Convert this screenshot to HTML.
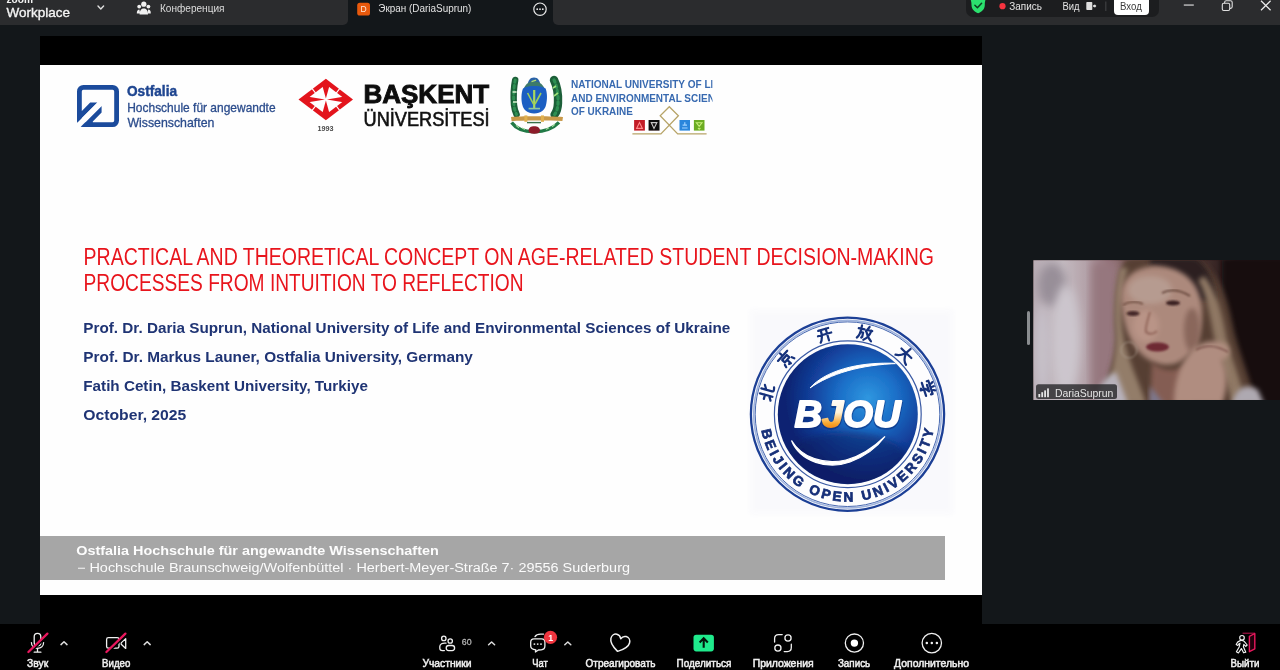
<!DOCTYPE html>
<html><head><meta charset="utf-8"><title>Zoom Workplace</title>
<style>
html,body{margin:0;padding:0;background:#13171a;overflow:hidden}
body{width:1280px;height:670px;position:relative;font-family:"Liberation Sans",sans-serif}
#titlebar{position:absolute;left:0;top:0;width:348px;height:25px;background:#2b2c2e;border-radius:0 0 5px 0}
#titlebar2{position:absolute;left:553px;top:0;width:727px;height:25px;background:#2b2c2e;border-radius:0 0 0 5px}
#tab{position:absolute;left:348px;top:0;width:205px;height:25px;background:#13171a;border-radius:0}
#pill{position:absolute;left:966px;top:0;width:193px;height:17px;background:#1c1d1f;border-radius:0 0 7px 7px}
#vhod{position:absolute;left:1114px;top:0;width:35px;height:15px;background:#fff;border-radius:0 0 4px 4px}
#stage{position:absolute;left:40px;top:36px;width:942px;height:588px;background:#000}
#slide{position:absolute;left:40px;top:65px;width:942px;height:530px;background:#fefefe}
#foot{position:absolute;left:40px;top:536px;width:905px;height:44px;background:#a6a6a6}
#toolbar{position:absolute;left:0;top:624px;width:1280px;height:46px;background:#000}
#video{position:absolute;left:1033px;top:260px;width:247px;height:140px;background:#2a1a18;overflow:hidden}
#grip{position:absolute;left:1027px;top:311px;width:3px;height:34px;background:#8a8d90;border-radius:2px}
svg{position:absolute;left:0;top:0;filter:blur(0.3px)}
text{font-family:"Liberation Sans",sans-serif}
</style></head><body>
<div id="titlebar"></div><div id="titlebar2"></div><div id="tab"></div><div id="pill"></div><div id="vhod"></div>
<div id="stage"></div><div id="slide"></div><div id="foot"></div>
<div id="video"></div><div id="grip"></div>
<div id="toolbar"></div>
<svg id="ov" width="1280" height="670" viewBox="0 0 1280 670">
<!-- ===== TITLE BAR ===== -->
<g id="titlebar-content" fill="#e6e6e6">
  <text x="6.5" y="2.5" font-size="11" font-weight="bold" textLength="26.5" lengthAdjust="spacingAndGlyphs" fill="#f2f2f2">zoom</text>
  <text x="6.5" y="16.7" font-size="13.4" textLength="63.5" lengthAdjust="spacingAndGlyphs" fill="#f4f4f4" stroke="#f4f4f4" stroke-width="0.35">Workplace</text>
  <path d="M98 6.1 L100.8 8.9 L103.6 6.1" fill="none" stroke="#e0e0e0" stroke-width="1.4" stroke-linecap="round" stroke-linejoin="round"/>
  <!-- conference people icon -->
  <g fill="#f0f0f0">
    <circle cx="143.8" cy="4.2" r="2.6"/>
    <circle cx="139.2" cy="6.6" r="1.9"/>
    <circle cx="148.4" cy="6.6" r="1.9"/>
    <path d="M139.6 14.6 C139.6 10.2 141.4 8.4 143.8 8.4 C146.2 8.4 148 10.2 148 14.6 Z"/>
    <path d="M136.8 13.6 C136.8 10.6 137.8 9.6 139.4 9.6 L140.2 13.6 Z"/>
    <path d="M150.8 13.6 C150.8 10.6 149.8 9.6 148.2 9.6 L147.4 13.6 Z"/>
  </g>
  <text x="160" y="12" font-size="10" textLength="64.5" lengthAdjust="spacingAndGlyphs" fill="#dcdcdc">Конференция</text>
  <!-- active tab -->
  <rect x="357.2" y="2.8" width="12.8" height="12.8" rx="2.6" fill="#e8590c"/>
  <text x="360.6" y="12.3" font-size="8.5" fill="#ffe9dc">D</text>
  <text x="378.3" y="12" font-size="10" textLength="93" lengthAdjust="spacingAndGlyphs" fill="#e2e2e2">Экран (DariaSuprun)</text>
  <circle cx="540" cy="9.2" r="6.2" fill="none" stroke="#e8e8e8" stroke-width="1.2"/>
  <circle cx="537.2" cy="9.2" r="0.9" fill="#e8e8e8"/><circle cx="540" cy="9.2" r="0.9" fill="#e8e8e8"/><circle cx="542.8" cy="9.2" r="0.9" fill="#e8e8e8"/>
  <!-- right pill -->
  <path d="M970.8 0 H985.4 C985 1.6 984.8 3 984.8 5 C984.8 9.5 981.5 12 978.1 13.2 C974.8 12 971.5 9.5 971.5 5 C971.5 3 971.2 1.6 970.8 0 Z" fill="#2be06e"/>
  <path d="M974.9 5.2 L977.4 7.7 L981.6 3.2" fill="none" stroke="#0c3d20" stroke-width="1.5" stroke-linecap="round" stroke-linejoin="round"/>
  <circle cx="1002.5" cy="6.2" r="3.1" fill="#f5333f"/>
  <text x="1009.3" y="9.6" font-size="10" textLength="32.7" lengthAdjust="spacingAndGlyphs" fill="#e4e4e4">Запись</text>
  <text x="1062.5" y="9.6" font-size="10" textLength="17" lengthAdjust="spacingAndGlyphs" fill="#e4e4e4">Вид</text>
  <rect x="1086.3" y="2" width="6" height="8" rx="0.8" fill="#dedede"/>
  <path d="M1093.2 4.9 H1094.6 V3.9 L1096.4 6 L1094.6 8.1 V7.1 H1093.2 Z" fill="#dedede"/>
  <rect x="1105.4" y="1.5" width="0.9" height="9.5" fill="#4a4b4d"/>
  <text x="1120" y="9.6" font-size="10" textLength="21.8" lengthAdjust="spacingAndGlyphs" fill="#3a3a3a">Вход</text>
  <!-- window controls -->
  <rect x="1183.8" y="4.5" width="10" height="1.1" fill="#e6e6e6"/>
  <rect x="1222.3" y="3.3" width="7.4" height="7.2" rx="1.4" fill="none" stroke="#e0e0e0" stroke-width="1.1"/>
  <path d="M1224.6 3.2 V2.4 C1224.6 1.4 1225.2 0.8 1226.2 0.8 H1230.6 C1231.6 0.8 1232.2 1.4 1232.2 2.4 V6.8 C1232.2 7.8 1231.6 8.4 1230.6 8.4 H1229.9" fill="none" stroke="#e0e0e0" stroke-width="1.1"/>
  <path d="M1261 0.8 L1270.6 10.2 M1270.6 0.8 L1261 10.2" stroke="#ececec" stroke-width="1.2" fill="none"/>
</g>
<!-- ===== SLIDE CONTENT ===== -->
<g id="slide-text">
  <text x="83.6" y="264.5" font-size="23" fill="#e8141c" textLength="850.4" lengthAdjust="spacingAndGlyphs">PRACTICAL AND THEORETICAL CONCEPT ON AGE-RELATED STUDENT DECISION-MAKING</text>
  <text x="83.6" y="290.8" font-size="23" fill="#e8141c" textLength="440" lengthAdjust="spacingAndGlyphs">PROCESSES FROM INTUITION TO REFLECTION</text>
  <g font-size="15.4" font-weight="bold" fill="#1f3474">
    <text x="83.3" y="333.1" textLength="647" lengthAdjust="spacingAndGlyphs">Prof. Dr. Daria Suprun, National University of Life and Environmental Sciences of Ukraine</text>
    <text x="83.3" y="361.9" textLength="389.6" lengthAdjust="spacingAndGlyphs">Prof. Dr. Markus Launer, Ostfalia University, Germany</text>
    <text x="83.3" y="390.8" textLength="284.6" lengthAdjust="spacingAndGlyphs">Fatih Cetin, Baskent University, Turkiye</text>
    <text x="83.3" y="419.7" textLength="103" lengthAdjust="spacingAndGlyphs">October, 2025</text>
  </g>
  <text x="76.2" y="554.6" font-size="12" font-weight="bold" fill="#fdfdfd" textLength="362.6" lengthAdjust="spacingAndGlyphs">Ostfalia Hochschule für angewandte Wissenschaften</text>
  <text x="77" y="571.5" font-size="12" fill="#fbfbfb" textLength="553" lengthAdjust="spacingAndGlyphs">− Hochschule Braunschweig/Wolfenbüttel · Herbert-Meyer-Straße 7· 29556 Suderburg</text>
</g>
<!-- Ostfalia logo -->
<g id="ostfalia">
  <rect x="79.4" y="87.4" width="37.2" height="37.2" rx="4" fill="none" stroke="#1b4b9c" stroke-width="4.8"/>
  <polygon points="81.9,110.9 90.2,102.5 97.4,102.5 77.1,122.8 77.1,112" fill="#1b4b9c"/>
  <polygon points="101.6,105.9 101.6,112.6 92.8,121.4 92.8,126.8 80.9,126.8" fill="#1b4b9c"/>
  <polygon points="73,126.9 97.5,102.4 97.5,100 104,100 104,103.5 80.5,127 80.5,130 73,130" fill="#fefefe"/>
  <text x="127" y="96.2" font-size="14" font-weight="bold" fill="#1e4590" stroke="#1e4590" stroke-width="0.45" textLength="50" lengthAdjust="spacingAndGlyphs">Ostfalia</text>
  <text x="127.2" y="112.2" font-size="12.6" fill="#2b4c8c" stroke="#2b4c8c" stroke-width="0.3" textLength="148.4" lengthAdjust="spacingAndGlyphs">Hochschule für angewandte</text>
  <text x="127.4" y="126.8" font-size="12.6" fill="#2b4c8c" stroke="#2b4c8c" stroke-width="0.3" textLength="87" lengthAdjust="spacingAndGlyphs">Wissenschaften</text>
</g>
<!-- Baskent logo -->
<g id="baskent">
  <polygon points="298.5,99.5 325.9,78.7 353,99.5 325.9,120.3" fill="#e3141c"/>
  <polygon points="306.2,99.5 325.9,84.5 345.6,99.5 325.9,114.5" fill="#fefefe"/>
  <polygon points="325.9,98.6 322.3,85.6 325.9,82 329.5,85.6" fill="#e3141c"/>
  <polygon points="325.9,100.4 322.3,113.4 325.9,117 329.5,113.4" fill="#e3141c"/>
  <polygon points="324.9,99.5 308.6,96.7 304,99.5 308.6,102.3" fill="#e3141c"/>
  <polygon points="326.9,99.5 343.2,96.7 348,99.5 343.2,102.3" fill="#e3141c"/>
  <g stroke="#fefefe" stroke-width="1.1">
    <path d="M310.6 86.6 L315.6 93.2 M341.2 86.6 L336.2 93.2 M310.6 112.4 L315.6 105.8 M341.2 112.4 L336.2 105.8"/>
  </g>
  <text x="317.4" y="131.1" font-size="7.2" font-weight="bold" fill="#4a4a4a" textLength="16" lengthAdjust="spacingAndGlyphs">1993</text>
  <text x="363.4" y="102.8" font-size="25.7" font-weight="bold" fill="#0d0d0d" stroke="#0d0d0d" stroke-width="0.9" textLength="125.8" lengthAdjust="spacingAndGlyphs">BAŞKENT</text>
  <text x="363.6" y="126" font-size="20" fill="#111" stroke="#111" stroke-width="0.6" textLength="126" lengthAdjust="spacingAndGlyphs">ÜNİVERSİTESİ</text>
</g>
<!-- NUBiP logo -->
<defs>
  <clipPath id="nubclip"><rect x="505" y="70" width="207.5" height="70"/></clipPath>
  <filter id="b06" x="-5%" y="-5%" width="110%" height="110%"><feGaussianBlur stdDeviation="0.6"/></filter>
  <filter id="b04" x="-5%" y="-5%" width="110%" height="110%"><feGaussianBlur stdDeviation="0.4"/></filter>
</defs>
<g id="nubip" clip-path="url(#nubclip)">
  <g filter="url(#b06)">
    <!-- wreaths -->
    <path d="M515.2 80 C513.6 88 513.4 98 514 105 C514.4 109 515.4 112 516.6 114.5" fill="none" stroke="#1b5e38" stroke-width="6.4" stroke-linecap="round"/>
    <path d="M515.2 80 C513.6 88 513.4 98 514 105 C514.4 109 515.4 112 516.6 114.5" fill="none" stroke="#2f8f52" stroke-width="3" stroke-dasharray="2.4 3.2" stroke-linecap="round"/>
    <path d="M512.6 92 h4 M513 102 h4" stroke="#d8f0d0" stroke-width="1.6"/>
    <path d="M554 80 C557 86 558.4 95 558 103 C557.8 108 556.6 112 554.6 114.5" fill="none" stroke="#1b5e38" stroke-width="8.4" stroke-linecap="round"/>
    <path d="M554 80 C557 86 558.4 95 558 103 C557.8 108 556.6 112 554.6 114.5" fill="none" stroke="#2f8f52" stroke-width="3.2" stroke-dasharray="2.4 3.2" stroke-linecap="round"/>
    <path d="M554 96 l4 -3 M553 88 l3 -2" stroke="#9fe07a" stroke-width="1.6"/>
    <!-- top crest -->
    <path d="M527.5 86.5 C527.5 81 530 77.6 534 77.6 C538 77.6 540.4 81 540.4 86.5 Z" fill="#2a62a8"/>
    <path d="M524 88 C526 83 530 81.4 534 81.4 C538 81.4 542 83 544.4 88 Z" fill="#3d7a6a"/>
    <path d="M531.5 81.6 l4.6 -1.4" stroke="#b8e070" stroke-width="1.4"/>
    <!-- shield -->
    <path d="M523 88.6 C526 86.6 530 86 534.2 86 C538.4 86 542.6 86.6 545.6 88.6 C547.4 93 547.4 100 546 105 C545 109.6 541 113.4 534.2 113.6 C527.4 113.4 523.4 109.6 522.4 105 C521 100 521.2 93 523 88.6 Z" fill="#1f5fc2"/>
    <!-- wheat -->
    <path d="M534.2 90 V108" stroke="#a8d860" stroke-width="2.2"/>
    <path d="M527.6 93 L533.4 104 M541 93 L535 104" stroke="#9ccf58" stroke-width="1.6"/>
    <path d="M528.6 108.6 H540" stroke="#8fc7a0" stroke-width="1.6"/>
    <!-- banner -->
    <path d="M511 117 C520 116 548 116 563 117 L562.4 121 C548 120.4 522 120.4 511.6 121.2 Z" fill="#c9994a"/>
    <rect x="524.4" y="115.4" width="3" height="6.4" fill="#e0b050"/><rect x="541" y="115.4" width="3" height="6.4" fill="#e0b050"/>
    <path d="M527 122.6 H541" stroke="#37704a" stroke-width="1.4"/>
    <!-- bottom wreath -->
    <path d="M511.6 122.4 C516 128.6 524 131.6 534.2 131.8 C544.4 131.6 553 128.6 559 122.4" fill="none" stroke="#237a46" stroke-width="3.4"/>
    <path d="M516 125.4 l3 2.4 M522 128 l3 1.6 M546 129.4 l3 -1.6 M552 126.8 l3 -2.4" stroke="#9fdc9a" stroke-width="1.1"/>
    <!-- red bottom -->
    <path d="M528.6 130.6 C528.6 127.6 531 126.2 534.2 126.2 C537.4 126.2 540 127.6 540 130.6 C540 132.8 538 133.8 534.2 133.8 C530.4 133.8 528.6 132.8 528.6 130.6 Z" fill="#8c1c2c"/>
  </g>
  <g font-size="10" font-weight="bold" fill="#3769b0" filter="url(#b04)">
    <text x="571" y="88" textLength="155.2" lengthAdjust="spacingAndGlyphs">NATIONAL UNIVERSITY OF LIFE</text>
    <text x="571" y="101.7" textLength="164.4" lengthAdjust="spacingAndGlyphs">AND ENVIRONMENTAL SCIENCES</text>
    <text x="571" y="115.4" textLength="61.9" lengthAdjust="spacingAndGlyphs">OF UKRAINE</text>
  </g>
  <g filter="url(#b04)">
    <path d="M632.4 133.9 H660.9 L678.4 115.8 L669.3 106.7 L660.2 115.8 L677.7 133.9 H706.6" fill="none" stroke="#b7a468" stroke-width="1.3" stroke-linejoin="miter"/>
    <rect x="634.1" y="120" width="10.8" height="10.6" fill="#c21c28"/>
    <path d="M636.6 128.4 L639.5 122.6 L642.4 128.4 Z" fill="none" stroke="#ff8a8a" stroke-width="1.1"/>
    <rect x="648.6" y="120" width="10.9" height="10.6" fill="#0c0808"/>
    <path d="M651.2 122.6 L654 128.4 L656.9 122.6 Z" fill="none" stroke="#c8c8c8" stroke-width="1.1"/>
    <rect x="679.5" y="120" width="10.5" height="10.6" fill="#2a86dc"/>
    <path d="M682 128 H687.6 M682.6 125.2 H687 M684.8 122.2 V125" stroke="#9fd2ff" stroke-width="1.2" fill="none"/>
    <rect x="693.9" y="120" width="10.6" height="10.6" fill="#6cac20"/>
    <path d="M696.4 122.8 H702 L699.2 126.4 Z M698 128 L699.2 129.2 L700.4 128" stroke="#c6ee7a" stroke-width="1.1" fill="none"/>
  </g>
</g>
<!-- BJOU logo -->
<defs>
  <radialGradient id="disc" cx="868" cy="398" r="82" gradientUnits="userSpaceOnUse">
    <stop offset="0" stop-color="#2f97e0"/><stop offset="0.35" stop-color="#1b6fc8"/><stop offset="0.7" stop-color="#123f9a"/><stop offset="1" stop-color="#0c2472"/>
  </radialGradient>
  <linearGradient id="jgrad" x1="0" y1="398" x2="0" y2="430" gradientUnits="userSpaceOnUse">
    <stop offset="0" stop-color="#ffffff"/><stop offset="0.45" stop-color="#fff3d8"/><stop offset="0.8" stop-color="#f7a52c"/><stop offset="1" stop-color="#ef7d12"/>
  </linearGradient>
  <filter id="b08" x="-5%" y="-5%" width="110%" height="110%"><feGaussianBlur stdDeviation="0.7"/></filter>
  <filter id="b3" x="-10%" y="-10%" width="120%" height="120%"><feGaussianBlur stdDeviation="3"/></filter>
  <path id="bjarc" d="M761.4 430.2 A87.6 87.6 0 0 0 933.6 430.2"/>
  <clipPath id="discclip"><circle cx="847.8" cy="414.2" r="69.5"/></clipPath>
</defs>
<g id="bjou">
  <rect x="750" y="310" width="203" height="204" fill="#f9f9fc" filter="url(#b3)"/>
  <g filter="url(#b08)">
    <circle cx="847.5" cy="414.2" r="96.6" fill="#fdfdfe" stroke="#1c3f96" stroke-width="2.3"/>
    <circle cx="847.5" cy="414.2" r="93.8" fill="none" stroke="#9fb3dc" stroke-width="1.6"/>
    <circle cx="847.5" cy="414.2" r="92.3" fill="none" stroke="#3358a8" stroke-width="0.9"/>
    <circle cx="847.8" cy="414.2" r="73.4" fill="none" stroke="#3a5aa4" stroke-width="1.2"/>
    <circle cx="847.8" cy="414.2" r="70" fill="url(#disc)"/>
    <g clip-path="url(#discclip)">
      <ellipse cx="846" cy="462" rx="62" ry="30" fill="#081a5c" opacity="0.45" filter="url(#b3)"/>
      <!-- swooshes -->
      <path d="M810 388 C824 372 856 361 899 363.5 C860 364.5 830 374 810 388 Z" fill="#ffffff" stroke="#ffffff" stroke-width="1"/>
      <path d="M791.5 440.5 C800 462 828 470 850 462 C866 456 878 446 885 436.5 C872 449 858 457 846 460 C824 465 802 458 791.5 440.5 Z" fill="#ffffff" stroke="#ffffff" stroke-width="1.2"/>
    </g>
    <!-- BJOU -->
    <g font-size="37" font-weight="bold" font-style="italic" stroke-linejoin="round">
      <text x="794.5" y="428" fill="#0b2a78" opacity="0.55" textLength="106" lengthAdjust="spacingAndGlyphs" stroke="#0b2a78" stroke-width="3.4">BJOU</text>
      <text x="794.5" y="427" fill="#ffffff" stroke="#ffffff" stroke-width="1.8" textLength="106" lengthAdjust="spacingAndGlyphs">B<tspan fill="url(#jgrad)" stroke="url(#jgrad)">J</tspan>OU</text>
    </g>
    <!-- ring text -->
    <text font-size="13.6" font-weight="bold" fill="#152f78" stroke="#152f78" stroke-width="0.7"><textPath href="#bjarc" textLength="243" lengthAdjust="spacing">BEIJING OPEN UNIVERSITY</textPath></text>
    <!-- pseudo-calligraphy CJK glyphs -->
    <g fill="none" stroke="#15317c" stroke-width="2.6" stroke-linecap="round" stroke-linejoin="round">
      <g transform="translate(767.3 392.7) rotate(-75) scale(0.86)"><path d="M-3 -8 V7 M-3 -2 H-8 M-8 6 L-3 3 M3 -8 V5 C3 7 5 7 8 6 M3 -2 L8 -5"/></g>
      <g transform="translate(785.8 358.7) rotate(-48) scale(0.86)"><path d="M0 -9 V-7 M-8 -5 H8 M-4 -2 H4 V2 H-4 Z M0 2 V8 L-2 7 M-6 4 L-7 7 M6 4 L7 7"/></g>
      <g transform="translate(824.6 334.4) rotate(-16) scale(0.86)"><path d="M-6 -6 H6 M-8 0 H8 M-3 -6 C-3 2 -4 5 -7 8 M3 -6 V8"/></g>
      <g transform="translate(864.8 333) rotate(12) scale(0.86)"><path d="M-5 -8 V-6 M-8 -4 H-1 M-5 -4 C-5 2 -6 5 -8 7 M-5 0 H-2 V5 L-3 6 M4 -8 L1 -2 M2 -4 H8 M7 -4 C6 2 3 6 0 8 M2 -1 C4 3 6 6 9 8"/></g>
      <g transform="translate(905.2 354.5) rotate(44) scale(0.86)"><path d="M-8 -2 H8 M0 -9 C0 -1 -3 5 -8 8 M0 -1 C2 4 5 7 9 8"/></g>
      <g transform="translate(926.4 388.6) rotate(72) scale(0.86)"><path d="M-5 -9 L-4 -7 M0 -9 V-7 M5 -9 L4 -7 M-8 -3 V-5 H8 V-3 M-4 -2 H4 L0 1 V7 L-2 6 M-8 3 H8"/></g>
    </g>
  </g>
</g>
<!-- webcam tile -->
<defs>
  <clipPath id="vclip"><rect x="1033.4" y="260.2" width="246.6" height="139.8"/></clipPath>
  <filter id="vb6" x="-20%" y="-20%" width="140%" height="140%"><feGaussianBlur stdDeviation="5"/></filter>
  <filter id="vb3" x="-20%" y="-20%" width="140%" height="140%"><feGaussianBlur stdDeviation="2.5"/></filter>
  <filter id="vb1" x="-20%" y="-20%" width="140%" height="140%"><feGaussianBlur stdDeviation="1.2"/></filter>
  <linearGradient id="vbg" x1="1033" y1="0" x2="1280" y2="0" gradientUnits="userSpaceOnUse">
    <stop offset="0" stop-color="#cfc4cc"/><stop offset="0.12" stop-color="#ddd5db"/><stop offset="0.22" stop-color="#c9b6bd"/><stop offset="0.3" stop-color="#a8848c"/><stop offset="0.38" stop-color="#8a6a66"/><stop offset="0.7" stop-color="#4a3430"/><stop offset="0.82" stop-color="#1e1315"/><stop offset="1" stop-color="#140d10"/>
  </linearGradient>
</defs>
<g id="video" clip-path="url(#vclip)">
  <rect x="1033" y="260" width="247" height="140" fill="url(#vbg)"/>
  <ellipse cx="1052" cy="285" rx="14" ry="22" fill="#aaa2ac" filter="url(#vb6)"/>
  <ellipse cx="1066" cy="340" rx="14" ry="55" fill="#e6e1e8" filter="url(#vb6)"/>
  <ellipse cx="1042" cy="350" rx="7" ry="45" fill="#e0dbe4" filter="url(#vb6)"/>
  <rect x="1092" y="262" width="26" height="140" fill="#a8878e" filter="url(#vb6)"/>
  <!-- dark right bg -->
  <rect x="1222" y="258" width="62" height="146" fill="#150d11" filter="url(#vb3)"/>
  <!-- hair mass -->
  <path d="M1124 262 C1116 280 1114 310 1116 336 C1116 360 1106 380 1100 404 H1256 C1250 376 1238 352 1232 322 C1226 290 1214 264 1192 258 H1130 Z" fill="#5e4638" filter="url(#vb3)"/>
  <path d="M1150 258 H1196 C1208 266 1214 280 1216 300 L1196 300 C1192 282 1176 268 1150 266 Z" fill="#2e2420" filter="url(#vb3)"/>
  <path d="M1120 268 C1114 290 1114 316 1116 336 C1116 362 1108 382 1104 404 H1146 C1140 384 1130 366 1124 340 C1120 318 1120 292 1128 268 Z" fill="#a58e76" filter="url(#vb3)"/>
  <path d="M1204 276 C1216 290 1222 312 1226 336 C1230 356 1240 376 1246 404 H1232 C1226 376 1216 352 1212 326 C1208 304 1204 290 1198 280 Z" fill="#a08870" filter="url(#vb3)"/>
  <!-- face -->
  <path d="M1121 300 C1120 280 1132 268 1154 266 C1180 266 1200 280 1202 308 C1203 334 1194 358 1174 364 C1156 368 1138 356 1130 338 C1124 326 1122 312 1121 300 Z" fill="#c29c8c" filter="url(#vb3)"/>
  <ellipse cx="1150" cy="290" rx="22" ry="14" fill="#cdb0a2" filter="url(#vb3)"/>
  <ellipse cx="1146" cy="326" rx="13" ry="16" fill="#d0a898" filter="url(#vb3)"/>
  <ellipse cx="1192" cy="330" rx="8" ry="22" fill="#9a7466" filter="url(#vb3)"/>
  <!-- neck -->
  <path d="M1152 362 C1162 372 1178 372 1188 364 L1192 404 H1150 Z" fill="#94695c" filter="url(#vb3)"/>
  <ellipse cx="1202" cy="370" rx="7" ry="12" fill="#1c1214" filter="url(#vb3)"/>
  <!-- clothes -->
  <path d="M1094 404 C1098 384 1106 376 1116 372 L1128 404 Z" fill="#cfcbd4" filter="url(#vb3)"/>
  <path d="M1232 404 C1236 388 1246 382 1258 390 L1264 404 Z" fill="#c4c0c8" filter="url(#vb3)"/>
  <path d="M1150 386 L1164 404 H1150 Z" fill="#8a88a0" filter="url(#vb3)"/>
  <!-- hand -->
  <path d="M1174 404 C1174 382 1180 364 1190 352 C1198 342 1214 338 1226 344 C1232 350 1230 358 1222 360 C1228 372 1228 388 1222 404 Z" fill="#c6a090" filter="url(#vb3)"/>
  <path d="M1196 350 C1206 344 1218 346 1228 352" stroke="#8a5e54" stroke-width="1.6" fill="none" filter="url(#vb1)"/>
  <!-- features -->
  <ellipse cx="1133" cy="313.5" rx="6.5" ry="2.4" fill="#4a2c2a" filter="url(#vb1)"/>
  <ellipse cx="1173" cy="303" rx="7" ry="2.6" fill="#3c2422" filter="url(#vb1)"/>
  <path d="M1123 305 C1129 301 1137 301 1143 304" stroke="#7a5646" stroke-width="1.6" fill="none" filter="url(#vb1)"/>
  <path d="M1162 293 C1170 289 1180 290 1190 296" stroke="#6a483a" stroke-width="1.7" fill="none" filter="url(#vb1)"/>
  <path d="M1150 312 C1147 322 1145 328 1146 332 C1150 335 1154 334 1157 331" stroke="#a8796a" stroke-width="2.2" fill="none" filter="url(#vb1)"/>
  <ellipse cx="1157.5" cy="347" rx="11.5" ry="4.6" fill="#7a2f39" filter="url(#vb1)"/>
  <circle cx="1129" cy="350" r="8" fill="none" stroke="#cdbfae" stroke-width="1" filter="url(#vb1)" opacity="0.7"/>
  <rect x="1033" y="260" width="247" height="140" fill="#1c1216" opacity="0.13"/>
  <!-- name tag -->
  <rect x="1036" y="384.3" width="81" height="14.8" rx="2.5" fill="#2a2a2c" opacity="0.82"/>
  <g fill="#e6e6e6"><rect x="1038.4" y="394" width="1.8" height="3.2"/><rect x="1041.3" y="392.2" width="1.8" height="5"/><rect x="1044.2" y="390.4" width="1.8" height="6.8"/><rect x="1047.1" y="388.4" width="1.8" height="8.8"/></g>
  <text x="1054.9" y="396.6" font-size="10.4" fill="#e4e4e4" textLength="58.5" lengthAdjust="spacingAndGlyphs">DariaSuprun</text>
</g>
<!-- ===== BOTTOM TOOLBAR ===== -->
<g id="toolbar-content" fill="none" stroke="#f0f0f0" stroke-width="1.3" stroke-linecap="round" stroke-linejoin="round">
  <!-- mic -->
  <rect x="34.2" y="633.4" width="6.6" height="12.4" rx="3.3"/>
  <path d="M31.4 642.6 C31.4 646 34 648.4 37.5 648.4 C41 648.4 43.6 646 43.6 642.6"/>
  <path d="M37.5 648.4 V652.2 M34.2 652.2 H40.9"/>
  <path d="M48.6 634.6 L29.6 653" stroke="#000" stroke-width="2"/><path d="M47.4 633.6 L28.4 652" stroke="#e8175d" stroke-width="2.3"/>
  <path d="M61 644.6 L64 641.8 L67 644.6" stroke="#dcdcdc" stroke-width="1.5"/>
  <!-- video -->
  <rect x="106.6" y="637.6" width="12.4" height="10.6" rx="1.8"/>
  <path d="M121.2 642.9 L125.7 638.6 V648.4 L121.2 644.2 Z"/>
  <path d="M126.6 634.6 L107.6 653" stroke="#000" stroke-width="2"/><path d="M125.4 633.6 L106.4 652" stroke="#e8175d" stroke-width="2.3"/>
  <path d="M144.2 644.6 L147.2 641.8 L150.2 644.6" stroke="#dcdcdc" stroke-width="1.5"/>
  <!-- participants -->
  <circle cx="443.8" cy="638.4" r="2.2"/>
  <circle cx="450.2" cy="641" r="2.2"/>
  <path d="M446 643.2 C442.4 642.6 439.8 644.2 439.8 646.6 V648.2 C439.8 649.8 440.8 650.6 442.4 650.6 H444.4"/>
  <rect x="446.2" y="645.5" width="8.4" height="5.1" rx="2.5"/>
  <path d="M488.6 644.8 L491.6 642 L494.6 644.8" stroke="#dcdcdc" stroke-width="1.5"/>
  <!-- chat -->
  <path d="M535 636.6 C536 634.8 538 634.1 540.6 634.1 H543.6"/>
  <path d="M534 638.9 H541.6 C543.6 638.9 544.9 640.2 544.9 642.2 V646 C544.9 648.2 543.4 649.6 541.2 649.8 L538.4 650 L535.4 652 L535.8 649.9 C533 649.6 530.7 648.2 530.7 646 V642.2 C530.7 640.2 532 638.9 534 638.9 Z"/>
  <g fill="#e8e8e8" stroke="none"><circle cx="534.4" cy="644.1" r="0.95"/><circle cx="537.7" cy="644.1" r="0.95"/><circle cx="541" cy="644.1" r="0.95"/></g>
  <circle cx="550.5" cy="637.3" r="6.6" fill="#f0353f" stroke="none"/>
  <path d="M564.8 644.8 L567.8 642 L570.8 644.8" stroke="#dcdcdc" stroke-width="1.5"/>
  <!-- heart -->
  <g transform="translate(619.6 643.2) rotate(14)" stroke-width="1.5">
    <path d="M0 8.4 C-5.4 5.2 -9.6 1.6 -9.6 -2.6 C-9.6 -6 -7.4 -8 -4.8 -8 C-2.8 -8 -1 -7 0 -4.6 C1 -7 2.8 -8 4.8 -8 C7.4 -8 9.6 -6 9.6 -2.6 C9.6 1.6 5.4 5.2 0 8.4 Z"/>
  </g>
  <!-- share -->
  <rect x="693.5" y="634.8" width="20.4" height="16.6" rx="2.8" fill="#1fea8c" stroke="none"/>
  <path d="M703.7 647.8 V640 M699.6 642.4 L703.7 638.3 L707.8 642.4" stroke="#04140b" stroke-width="2.1" stroke-linecap="butt" stroke-linejoin="miter"/>
  <!-- apps -->
  <path d="M774.6 642 V638.6 C774.6 636 776 634.6 778.6 634.6 H782.2"/>
  <circle cx="788" cy="638" r="3.1"/>
  <circle cx="777.9" cy="648.1" r="3.1"/>
  <path d="M791.3 644.2 V647.6 C791.3 650.2 789.9 651.6 787.3 651.6 H784.2"/>
  <!-- record -->
  <circle cx="854.4" cy="643.1" r="9.1"/>
  <circle cx="854.4" cy="643.1" r="3.7" fill="#ffffff" stroke="none"/>
  <!-- more -->
  <circle cx="931.8" cy="643.1" r="9.7"/>
  <g fill="#f0f0f0" stroke="none"><circle cx="926.8" cy="643.1" r="1.25"/><circle cx="931.8" cy="643.1" r="1.25"/><circle cx="936.9" cy="643.1" r="1.25"/></g>
  <!-- leave -->
  <path d="M1243 633.2 H1254.6" stroke="#c01450" stroke-width="1"/>
  <path d="M1249.4 636.3 L1254.8 633.5 V648.9 L1249.4 651.7 Z" fill="#22000c" stroke="#e8175d" stroke-width="1.4"/>
  <g stroke="#f2f2f2" stroke-width="1.15" fill="#000">
    <circle cx="1242" cy="637.8" r="2.3"/>
    <path d="M1240.2 640.6 C1238.4 641.2 1236.8 642.8 1236.2 644.4 L1237.8 645.4 C1238.4 644.2 1239.2 643.4 1240 643.2 L1239.2 647 L1236.4 651.8 L1238.4 653 L1241.4 648.6 L1243.6 652.8 L1245.8 652.2 L1243.4 646.8 L1243.8 644.4 L1245.8 646.4 L1247.2 645 L1244.2 641.4 C1243.2 640.6 1241.4 640.3 1240.2 640.6 Z"/>
  </g>
</g>
<g id="toolbar-labels" font-size="10.4" fill="#f0f0f0" stroke="#f0f0f0" stroke-width="0.5">
  <text x="27.1" y="666.7" textLength="21.1" lengthAdjust="spacingAndGlyphs">Звук</text>
  <text x="102.1" y="666.7" textLength="28.2" lengthAdjust="spacingAndGlyphs">Видео</text>
  <text x="422.4" y="666.7" textLength="49.2" lengthAdjust="spacingAndGlyphs">Участники</text>
  <text x="532.2" y="666.7" textLength="15.5" lengthAdjust="spacingAndGlyphs">Чат</text>
  <text x="585.5" y="666.7" textLength="70" lengthAdjust="spacingAndGlyphs">Отреагировать</text>
  <text x="676.6" y="666.7" textLength="54.8" lengthAdjust="spacingAndGlyphs">Поделиться</text>
  <text x="752.7" y="666.7" textLength="60.9" lengthAdjust="spacingAndGlyphs">Приложения</text>
  <text x="837.9" y="666.7" textLength="32.3" lengthAdjust="spacingAndGlyphs">Запись</text>
  <text x="894.1" y="666.7" textLength="74.9" lengthAdjust="spacingAndGlyphs">Дополнительно</text>
  <text x="1230.6" y="666.7" textLength="28.8" lengthAdjust="spacingAndGlyphs">Выйти</text>
</g>
<text x="461.8" y="644.8" font-size="9.8" textLength="9.8" lengthAdjust="spacingAndGlyphs" fill="#b4b4b4" stroke="#b4b4b4" stroke-width="0.3">60</text>
<text x="548.2" y="640.6" font-size="8.8" font-weight="bold" fill="#fff">1</text>

</svg>
</body></html>
